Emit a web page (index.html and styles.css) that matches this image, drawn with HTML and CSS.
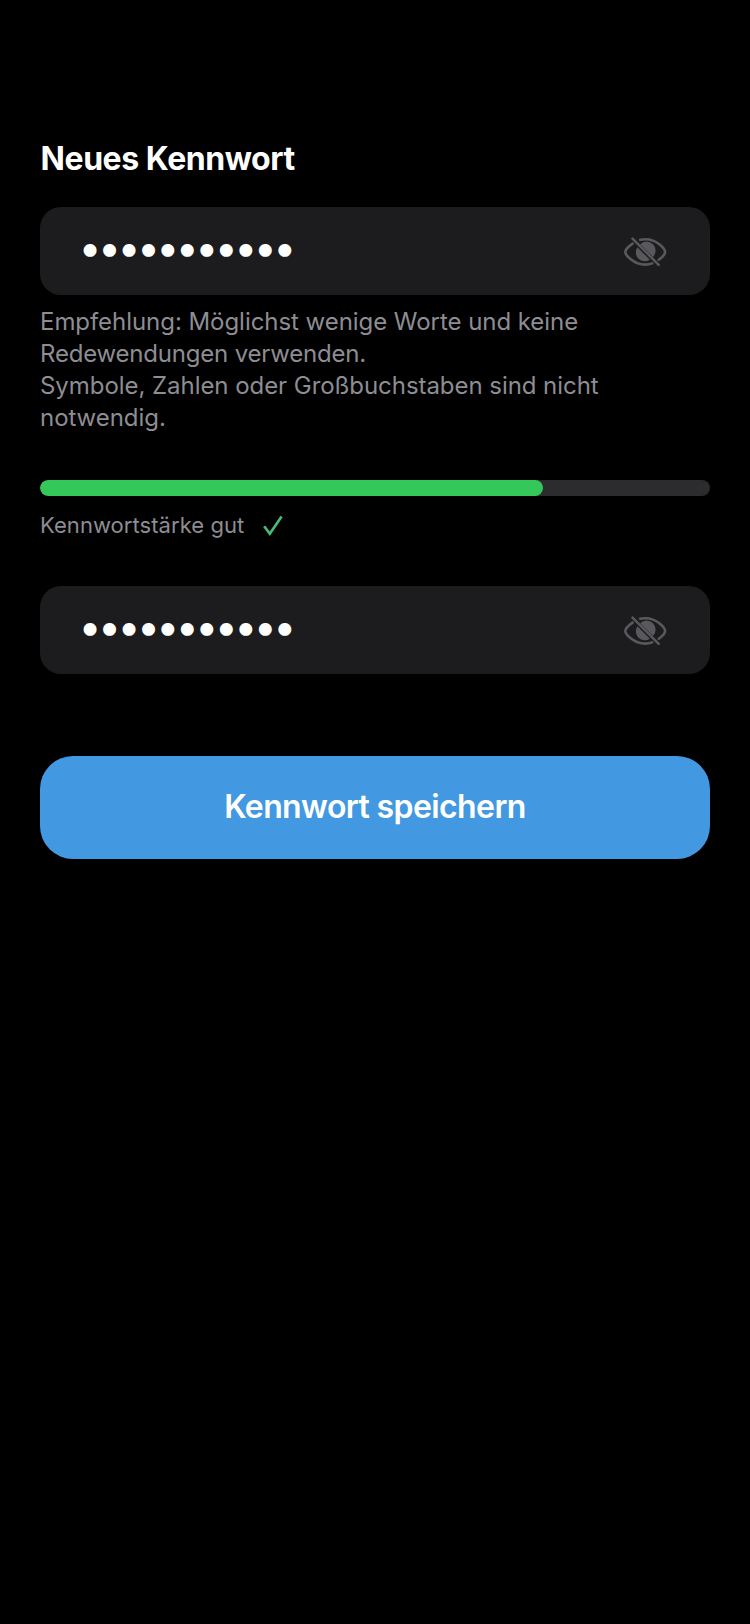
FILE: index.html
```html
<!DOCTYPE html>
<html lang="de">
<head>
<meta charset="utf-8">
<title>Neues Kennwort</title>
<link rel="stylesheet" href="styles.css">
</head>
<body>
<svg class="defs" width="0" height="0" aria-hidden="true">
  <symbol id="eye-off" viewBox="0 0 44 32">
    <g fill="none" stroke="currentColor" stroke-width="2.6" stroke-linecap="round">
      <path d="M17.1 3.8C18.8 3.4 20.6 3.2 22.5 3.2C34.2 3.2 42.1 13.2 42.1 16C42.1 17.8 39.6 21 35.8 23.7"/>
      <path d="M9.6 7.6C5 10.8 2.3 14.4 2.3 16C2.3 18.8 10.2 28.6 22.2 28.6C24.6 28.6 27 28.2 29.2 27.4"/>
      <path d="M9.5 2.6L35.7 28.8" stroke-width="2.5"/>
    </g>
    <path fill="currentColor" d="M17.2 8.2A9 9 0 0 1 30 21Z"/>
    <path fill="currentColor" d="M14.4 11.3A9 9 0 0 0 26.9 23.8Z"/>
  </symbol>
</svg>
<main class="screen">
  <h1 class="title">Neues Kennwort</h1>
  <div class="field">
    <span class="dots">•••••••••••</span>
    <svg class="eye"><use href="#eye-off"/></svg>
  </div>
  <p class="hint">Empfehlung: Möglichst wenige Worte und keine<br><span class="tight">Redewendungen verwenden.</span><br>Symbole, Zahlen oder Großbuchstaben sind nicht<br>notwendig.</p>
  <div class="meter"><div class="meter-fill"></div></div>
  <div class="strength">
    <span class="strength-label">Kennwortstärke gut</span>
    <svg class="check" viewBox="0 0 22 22"><path d="M2.2 11.2L7.8 18.8L19.6 1.6"/></svg>
  </div>
  <div class="field">
    <span class="dots">•••••••••••</span>
    <svg class="eye"><use href="#eye-off"/></svg>
  </div>
  <button class="save">Kennwort speichern</button>
</main>
</body>
</html>
```
FILE: styles.css
```css
body {
  margin: 0;
  background: #000;
  font-family: Inter, "Liberation Sans", sans-serif;
}
.defs { display: block; }
.screen {
  box-sizing: border-box;
  height: 1624px;
  padding: 139px 40px 0;
}
.title {
  margin: 0 0 28px;
  padding-left: 0.6px;
  color: #fff;
  font-size: 32px;
  line-height: 40px;
  font-weight: 700;
  letter-spacing: -0.45px;
  white-space: nowrap;
}
.field {
  box-sizing: border-box;
  height: 88px;
  padding: 0 43px 0 38.5px;
  border-radius: 21px;
  background: #1c1c1e;
  display: flex;
  align-items: center;
  justify-content: space-between;
}
.dots {
  margin-bottom: 8px;
  color: #fff;
  font-size: 41px;
  line-height: 48px;
  letter-spacing: -3.6px;
}
.eye {
  width: 44px;
  height: 32px;
  margin-top: 2px;
  color: #59595d;
}
.hint {
  margin: 11px 0 46px;
  color: #8d8d93;
  font-size: 24px;
  line-height: 32px;
  letter-spacing: -0.05px;
  white-space: nowrap;
}
.tight { letter-spacing: -0.2px; }
.meter {
  height: 16px;
  border-radius: 8px;
  background: #2c2c2e;
  overflow: hidden;
}
.meter-fill {
  width: 75%;
  height: 100%;
  border-radius: 8px;
  background: #34c759;
}
.strength {
  height: 28px;
  margin: 15px 0 47px;
  display: flex;
  align-items: center;
  gap: 18px;
}
.strength-label {
  color: #8d8d93;
  font-size: 22px;
  line-height: 28px;
  letter-spacing: 0.05px;
}
.check {
  width: 22px;
  height: 22px;
  margin-top: 1px;
  fill: none;
  stroke: #48bb78;
  stroke-width: 2.6;
}
.save {
  display: block;
  width: 100%;
  height: 103px;
  margin-top: 82px;
  padding: 0 0 1px;
  border: 0;
  border-radius: 33px;
  background: #4299e1;
  color: #fff;
  font: 600 32px/40px Inter, "Liberation Sans", sans-serif;
  letter-spacing: -0.6px;
}
```
